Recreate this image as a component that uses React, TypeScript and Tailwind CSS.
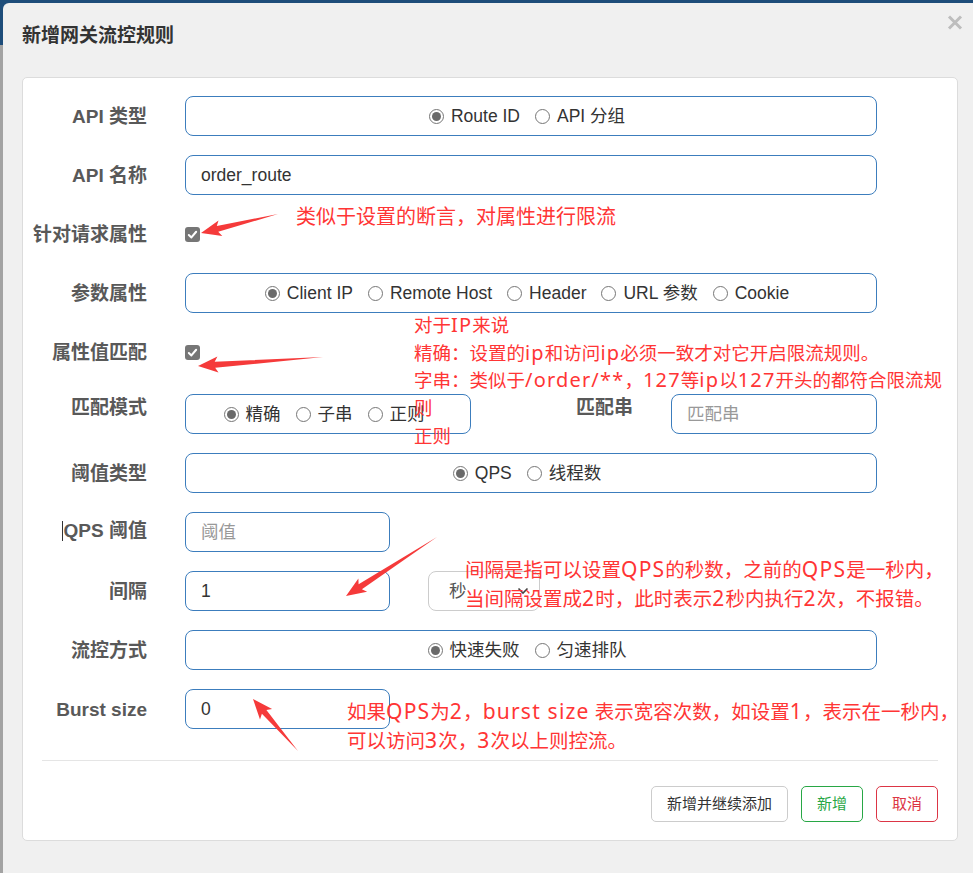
import React from 'react';

const ui = "font-['Liberation_Sans','Noto_Sans_CJK_SC',sans-serif]";
const note = "font-['Noto_Sans','Noto_Sans_CJK_SC',sans-serif]";

function arrowPoints(x1: number, y1: number, x2: number, y2: number) {
  const headLen = 17;
  const headW = 8;
  const shaftW = 3;
  const dx = x2 - x1;
  const dy = y2 - y1;
  const len = Math.hypot(dx, dy);
  const ux = dx / len;
  const uy = dy / len;
  const nx = -uy;
  const ny = ux;
  const bx = x2 - ux * headLen;
  const by = y2 - uy * headLen;
  const pts = [
    [x1, y1],
    [bx + nx * shaftW, by + ny * shaftW],
    [bx - ux * 3 + nx * headW, by - uy * 3 + ny * headW],
    [x2, y2],
    [bx - ux * 3 - nx * headW, by - uy * 3 - ny * headW],
    [bx - nx * shaftW, by - ny * shaftW],
  ];
  return pts.map((p) => p.map((v) => v.toFixed(1)).join(',')).join(' ');
}

// latin runs inside the red notes are drawn a bit wider, as in the screenshot
function L({ children }: { children: React.ReactNode }) {
  return <span className="text-[1.08em] tracking-[1.2px]">{children}</span>;
}

function Radio({ label, checked }: { label: string; checked?: boolean }) {
  return (
    <span className="flex items-center">
      <span className="flex h-[15px] w-[15px] items-center justify-center rounded-full border border-[#767676] bg-white">
        {checked && <span className="h-[9px] w-[9px] rounded-full bg-[#6a6a6a]" />}
      </span>
      <span className="ml-[7px]">{label}</span>
    </span>
  );
}

function RadioGroup({ items, width }: { items: string[]; width: string }) {
  return (
    <div
      className={`flex h-[40px] ${width} items-center justify-center gap-[15px] rounded-[8px] border border-[#3c7dbd] pr-[8px] text-[17.5px] text-[#333]`}
    >
      {items.map((it, i) => (
        <Radio key={it} label={it} checked={i === 0} />
      ))}
    </div>
  );
}

function TextBox({ value, placeholder, width }: { value?: string; placeholder?: string; width: string }) {
  return (
    <div
      className={`flex h-[40px] ${width} items-center rounded-[8px] border border-[#3c7dbd] pl-[15px] text-[17.5px] ${
        value ? 'text-[#333]' : 'text-[#999]'
      }`}
    >
      {value || placeholder}
    </div>
  );
}

function Check() {
  return (
    <span className="flex h-[15px] w-[15px] items-center justify-center rounded-[3px] bg-[#767676]">
      <svg width="11" height="11" viewBox="0 0 12 12">
        <path d="M2 6.5 L4.8 9.2 L10 3" fill="none" stroke="#fff" strokeWidth="2.2" strokeLinecap="round" strokeLinejoin="round" />
      </svg>
    </span>
  );
}

function Row({ label, children }: { label: React.ReactNode; children: React.ReactNode }) {
  return (
    <div className="flex h-[40px] items-center">
      <div className="w-[124px] pt-[2px] text-right text-[19px] font-bold text-[#595959]">{label}</div>
      <div className="ml-[38px] flex h-[40px] items-center">{children}</div>
    </div>
  );
}

export default function App() {
  return (
    <div
      className={`relative h-[873px] w-[973px] overflow-hidden bg-[linear-gradient(to_bottom,#1e4d7a_45px,#a3a3a3_45px)] ${ui}`}
    >
      <div className="relative ml-[3px] mt-[3px] h-[870px] w-[970px] rounded-tl-[6px] bg-[#f0f0f0]">
        {/* header */}
        <div className="h-[74px] px-[19px] pt-[20px]">
          <h4 className="text-[19px] font-bold leading-[26px] text-[#333]">新增网关流控规则</h4>
        </div>
        <svg className="absolute right-[10px] top-[12px]" width="16" height="15" viewBox="0 0 16 15">
          <path d="M2 1.5 L14 13.5 M14 1.5 L2 13.5" stroke="#bdbdbd" strokeWidth="3" />
        </svg>

        {/* body card */}
        <div className="mx-[19px] h-[764px] w-[936px] rounded-[5px] border border-[#dcdcdc] bg-white">
          <div className="flex flex-col gap-[19px] pt-[18px]">
            <Row label="API 类型">
              <RadioGroup items={['Route ID', 'API 分组']} width="w-[692px]" />
            </Row>
            <Row label="API 名称">
              <TextBox value="order_route" width="w-[692px]" />
            </Row>
            <Row label="针对请求属性">
              <Check />
            </Row>
            <Row label="参数属性">
              <RadioGroup items={['Client IP', 'Remote Host', 'Header', 'URL 参数', 'Cookie']} width="w-[692px]" />
            </Row>
            <Row label="属性值匹配">
              <Check />
            </Row>
            <div className="mt-[3px] flex h-[40px] items-start">
              <div className="w-[124px] text-right text-[19px] font-bold leading-[28px] text-[#595959]">匹配模式</div>
              <div className="ml-[38px] flex h-[40px] items-start">
                <RadioGroup items={['精确', '子串', '正则']} width="w-[286px]" />
                <div className="w-[162px] text-right text-[19px] font-bold leading-[28px] text-[#595959]">匹配串</div>
                <div className="ml-[38px]">
                  <TextBox placeholder="匹配串" width="w-[206px]" />
                </div>
              </div>
            </div>
            <Row label="阈值类型">
              <RadioGroup items={['QPS', '线程数']} width="w-[692px]" />
            </Row>
            <Row
              label={
                <span className="inline-flex items-center justify-end">
                  <span className="mr-px inline-block h-[20px] w-px bg-[#333]" />
                  QPS 阈值
                </span>
              }
            >
              <TextBox placeholder="阈值" width="w-[205px]" />
            </Row>
            <Row label="间隔">
              <TextBox value="1" width="w-[205px]" />
              <div className="relative ml-[38px] flex h-[40px] w-[112px] items-center rounded-[8px] border border-[#cccccc] pl-[20px] text-[17.5px] text-[#555]">
                秒
                <svg className="absolute right-[10px] top-[15px]" width="12" height="8" viewBox="0 0 12 8">
                  <path d="M1.5 1.5 L6 6 L10.5 1.5" fill="none" stroke="#444" strokeWidth="1.6" />
                </svg>
              </div>
            </Row>
            <Row label="流控方式">
              <RadioGroup items={['快速失败', '匀速排队']} width="w-[692px]" />
            </Row>
            <Row label="Burst size">
              <TextBox value="0" width="w-[205px]" />
            </Row>
          </div>

          <div className="mx-[19px] mt-[31px] border-t border-[#e5e5e5]" />

          <div className="mx-[19px] mt-[25px] flex justify-end gap-[13px] text-[15px]">
            <button className="h-[36px] rounded-[5px] border border-[#cccccc] bg-white px-[15px] text-[#333]">
              新增并继续添加
            </button>
            <button className="h-[36px] rounded-[5px] border border-[#28a745] bg-white px-[15px] text-[#28a745]">
              新增
            </button>
            <button className="h-[36px] rounded-[5px] border border-[#dc3545] bg-white px-[15px] text-[#dc3545]">
              取消
            </button>
          </div>
        </div>
      </div>

      {/* annotations drawn over the form */}
      <div className={`pointer-events-none absolute inset-0 text-[#ff3535] ${note}`}>
        <div className="absolute left-[296px] top-[203px] text-[20px] leading-[28px]">类似于设置的断言，对属性进行限流</div>
        <div className="absolute left-[414px] top-[311px] whitespace-nowrap text-[18.5px] leading-[27.7px]">
          <div>
            对于<L>IP</L>来说
          </div>
          <div>
            精确：设置的<L>ip</L>和访问<L>ip</L>必须一致才对它开启限流规则。
          </div>
          <div>
            字串：类似于<L>/order/**</L>，<L>127</L>等<L>ip</L>以<L>127</L>开头的都符合限流规
          </div>
          <div>则</div>
          <div>正则</div>
        </div>
        <div className="absolute left-[465px] top-[555px] whitespace-nowrap text-[19.5px] leading-[28px]">
          <div>
            间隔是指可以设置<L>QPS</L>的秒数，之前的<L>QPS</L>是一秒内，
          </div>
          <div>
            当间隔设置成<L>2</L>时，此时表示<L>2</L>秒内执行<L>2</L>次，不报错。
          </div>
        </div>
        <div className="absolute left-[347px] top-[697px] whitespace-nowrap text-[19.5px] leading-[28px]">
          <div>
            如果<L>QPS</L>为<L>2</L>，<L>burst size</L> 表示宽容次数，如设置<L>1</L>，表示在一秒内，
          </div>
          <div>
            可以访问<L>3</L>次，<L>3</L>次以上则控流。
          </div>
        </div>
        <svg className="absolute inset-0" width="973" height="873">
          <polygon points={arrowPoints(278, 214, 201, 233)} fill="#f53a3a" />
          <polygon points={arrowPoints(323, 357, 198, 366)} fill="#f53a3a" />
          <polygon points={arrowPoints(437, 537, 346, 596)} fill="#f53a3a" />
          <polygon points={arrowPoints(298, 751, 253, 699)} fill="#f53a3a" />
        </svg>
      </div>
    </div>
  );
}
